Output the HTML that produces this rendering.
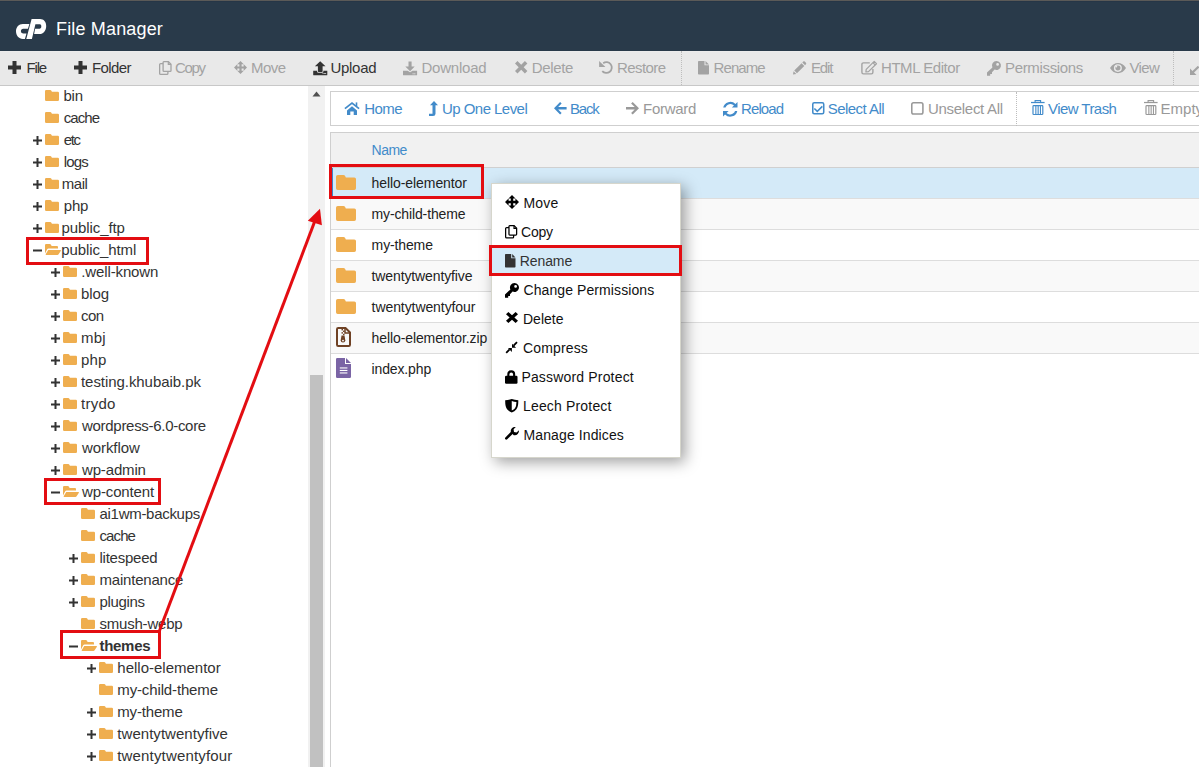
<!DOCTYPE html>
<html><head><meta charset="utf-8"><title>File Manager</title>
<style>
html,body{margin:0;padding:0;width:1199px;height:767px;overflow:hidden;background:#fff;position:relative;}
body{font-family:"Liberation Sans",sans-serif;}
.t{position:absolute;white-space:nowrap;font-family:"Liberation Sans",sans-serif;}
</style></head><body>
<div style="position:absolute;left:0px;top:0px;width:1199px;height:51px;background:#293a4a;"></div>
<div style="position:absolute;left:0px;top:0px;width:1199px;height:1px;background:#5b5a58;"></div>
<div style="position:absolute;left:0px;top:1px;width:1199px;height:1px;background:#263647;"></div>
<svg style="position:absolute;left:12px;top:15px" width="40" height="28" viewBox="0 0 40 28"><path fill="#fff" d="M17.4 8.9L10.8 8.9C6.8 8.9 4 12 4 16.3C4 20.6 6.8 23.9 10.8 23.9L12.9 23.9L14.5 18.4L10.9 18.4C9.6 18.4 8.9 17.4 8.9 16.1C8.9 14.7 9.8 13.7 11.1 13.7L15.95 13.7Z"/><path fill="#fff" d="M19.6 4L28 4C31.8 4 34.2 6.8 34.2 10.9C34.2 15.5 31.4 19 27.5 19L22.1 19L23.1 13.7L27.6 13.7C28.6 13.7 29.3 12.8 29.3 11.5C29.3 10.2 28.8 9.3 27.8 9.3L23.4 9.3L19.9 23.9L14.3 23.9Z"/></svg>
<div class="t" style="left:56.00px;top:20.16px;font-size:18px;line-height:18px;color:#fff;letter-spacing:0.164px;">File Manager</div>
<div style="position:absolute;left:0px;top:51px;width:1199px;height:34px;background:#e9e9e9;"></div>
<div style="position:absolute;left:0px;top:51px;width:1199px;height:1px;background:#ececec;"></div>
<div style="position:absolute;left:0px;top:85px;width:1199px;height:1px;background:#c8c8c8;"></div>
<svg style="position:absolute;left:8px;top:61px;overflow:visible" width="13" height="13" viewBox="0 0 13 13" preserveAspectRatio="none" fill="#333" stroke="#333" stroke-width="0"><rect x="4.5" y="0" width="4" height="13"/><rect x="0" y="4.5" width="13" height="4"/></svg>
<div class="t" style="left:26.50px;top:59.70px;font-size:15px;line-height:15px;color:#333;letter-spacing:-1.167px;">File</div>
<svg style="position:absolute;left:74px;top:61px;overflow:visible" width="13" height="13" viewBox="0 0 13 13" preserveAspectRatio="none" fill="#333" stroke="#333" stroke-width="0"><rect x="4.5" y="0" width="4" height="13"/><rect x="0" y="4.5" width="13" height="4"/></svg>
<div class="t" style="left:92.00px;top:59.70px;font-size:15px;line-height:15px;color:#333;letter-spacing:-0.600px;">Folder</div>
<svg style="position:absolute;left:158.5px;top:60.8px;overflow:visible" width="13" height="14" viewBox="0 0 13 14" preserveAspectRatio="none" fill="#a3a3a3" stroke="#a3a3a3" stroke-width="0"><path fill="none" stroke-width="1.3" d="M4.9 0.65H9.4L12 3.25V9.5Q12 10.35 11.15 10.35H4.95Q4.1 10.35 4.1 9.5V1.5Q4.1 0.65 4.9 0.65Z"/><path fill="none" stroke-width="1.2" d="M9.3 0.7V3.4H12"/><path fill="none" stroke-width="1.3" d="M4.1 2.6H1.7Q0.65 2.6 0.65 3.6V12.4Q0.65 13.35 1.7 13.35H7.9Q8.9 13.35 8.9 12.4V10.35"/></svg>
<div class="t" style="left:175.00px;top:59.70px;font-size:15px;line-height:15px;color:#a3a3a3;letter-spacing:-1.333px;">Copy</div>
<svg style="position:absolute;left:234px;top:61px;overflow:visible" width="13" height="13" viewBox="0 0 14 14" preserveAspectRatio="none" fill="#a3a3a3" stroke="#a3a3a3" stroke-width="0"><path fill-rule="evenodd" d="M7 0L14 7L7 14L0 7ZM3.6 3.6V5.8H5.8V3.6ZM8.2 3.6V5.8H10.4V3.6ZM3.6 8.2V10.4H5.8V8.2ZM8.2 8.2V10.4H10.4V8.2Z"/></svg>
<div class="t" style="left:251.00px;top:59.70px;font-size:15px;line-height:15px;color:#a3a3a3;letter-spacing:-0.533px;">Move</div>
<svg style="position:absolute;left:312.5px;top:60.5px;overflow:visible" width="14" height="14" viewBox="0 0 14 14" preserveAspectRatio="none" fill="#333" stroke="#333" stroke-width="0"><path d="M7.2 0.2L12.5 5.3H9.6V10.2Q9.6 10.9 8.9 10.9H5.6Q4.9 10.9 4.9 10.2V5.3H1.9Z"/><path d="M0.2 9.7H4.1V10.4Q4.1 11.7 5.4 11.7H9.1Q10.4 11.7 10.4 10.4V9.7H14.3V13.8Q14.3 14.3 13.8 14.3H0.7Q0.2 14.3 0.2 13.8Z"/><rect x="9.6" y="12.1" width="0.9" height="0.9" fill="#e9e9e9"/><rect x="10.9" y="12.1" width="0.9" height="0.9" fill="#e9e9e9"/><rect x="12.2" y="12.1" width="0.9" height="0.9" fill="#e9e9e9"/></svg>
<div class="t" style="left:330.50px;top:59.70px;font-size:15px;line-height:15px;color:#333;letter-spacing:-0.300px;">Upload</div>
<svg style="position:absolute;left:403.4px;top:60.5px;overflow:visible" width="14" height="14" viewBox="0 0 14 14" preserveAspectRatio="none" fill="#a3a3a3" stroke="#a3a3a3" stroke-width="0"><path d="M5.5 0.5H8.6V5.5H11.7L7.1 10.2L2.3 5.5H5.5Z"/><path d="M0 9.7H4.6L7.1 11.3L9.6 9.7H14.1V13.8Q14.1 14.3 13.6 14.3H0.5Q0 14.3 0 13.8Z"/><rect x="9.6" y="12.3" width="1" height="1" fill="#e9e9e9"/><rect x="11.3" y="12.3" width="1" height="1" fill="#e9e9e9"/></svg>
<div class="t" style="left:421.50px;top:59.70px;font-size:15px;line-height:15px;color:#a3a3a3;letter-spacing:-0.214px;">Download</div>
<svg style="position:absolute;left:514.6px;top:61px;overflow:visible" width="12.4" height="12.4" viewBox="0 0 12 11" preserveAspectRatio="none" fill="#a3a3a3" stroke="#a3a3a3" stroke-width="0"><path d="M2.4 0L6 3.3L9.6 0L12 2.2L8.4 5.5L12 8.8L9.6 11L6 7.7L2.4 11L0 8.8L3.6 5.5L0 2.2Z"/></svg>
<div class="t" style="left:531.70px;top:59.70px;font-size:15px;line-height:15px;color:#a3a3a3;letter-spacing:-0.340px;">Delete</div>
<svg style="position:absolute;left:599px;top:61px;overflow:visible" width="14" height="14" viewBox="0 0 14 14" preserveAspectRatio="none" fill="#a3a3a3" stroke="#a3a3a3" stroke-width="0"><path fill="none" stroke-width="1.8" d="M4.2 2.2A5.4 5.4 0 1 1 3.26 10.07"/><path d="M0.1 -0.1V5.9H6.4Z"/></svg>
<div class="t" style="left:617.00px;top:59.70px;font-size:15px;line-height:15px;color:#a3a3a3;letter-spacing:-0.567px;">Restore</div>
<div style="position:absolute;left:680.5px;top:51px;width:1px;height:34px;border-left:1px dotted #bdbdbd;width:0;"></div>
<svg style="position:absolute;left:698px;top:60.5px;overflow:visible" width="11" height="13.5" viewBox="0 0 11 14" preserveAspectRatio="none" fill="#a3a3a3" stroke="#a3a3a3" stroke-width="0"><path d="M0 .8Q0 0 .8 0H6.5V4.5H11V13.2Q11 14 10.2 14H.8Q0 14 0 13.2Z"/><path d="M7.5 0L11 3.5H7.5Z"/></svg>
<div class="t" style="left:713.60px;top:59.70px;font-size:15px;line-height:15px;color:#a3a3a3;letter-spacing:-0.920px;">Rename</div>
<svg style="position:absolute;left:793px;top:61px;overflow:visible" width="13.5" height="13.5" viewBox="0 0 14 14" preserveAspectRatio="none" fill="#a3a3a3" stroke="#a3a3a3" stroke-width="0"><path d="M0 14L0.6 10.6L3.4 13.4Z"/><path d="M1.3 9.9L8.9 2.3L11.7 5.1L4.1 12.7Z"/><path d="M9.7 1.5L10.6 0.6Q11.4 -0.2 12.2 0.6L13.4 1.8Q14.2 2.6 13.4 3.4L12.5 4.3Z"/></svg>
<div class="t" style="left:811.00px;top:59.70px;font-size:15px;line-height:15px;color:#a3a3a3;letter-spacing:-1.133px;">Edit</div>
<svg style="position:absolute;left:861px;top:61px;overflow:visible" width="16" height="14" viewBox="0 0 16 14" preserveAspectRatio="none" fill="#a3a3a3" stroke="#a3a3a3" stroke-width="0"><path fill="none" stroke-width="1.4" d="M8.8 1.9H2.5Q0.9 1.9 0.9 3.5V11.3Q0.9 12.9 2.5 12.9H10.3Q11.9 12.9 11.9 11.3V8"/><path fill="none" stroke-width="1.2" stroke-linejoin="round" d="M4.9 10.9L5.2 8.4L13.2 0.4L15.5 2.7L7.5 10.6Z"/><path fill="none" stroke-width="1.1" d="M11.9 1.7L14.2 4"/></svg>
<div class="t" style="left:881.00px;top:59.70px;font-size:15px;line-height:15px;color:#a3a3a3;letter-spacing:-0.450px;">HTML Editor</div>
<svg style="position:absolute;left:987px;top:61px;overflow:visible" width="14" height="14" viewBox="0 0 14 14" preserveAspectRatio="none" fill="#a3a3a3" stroke="#a3a3a3" stroke-width="0"><path d="M9.5 0A4.5 4.5 0 1 1 7.6 8.6L5 11.2V13H3.2V14.8H0V11.6L5.4 6.4A4.5 4.5 0 0 1 9.5 0ZM10.6 2A1.4 1.4 0 1 0 10.6 4.8A1.4 1.4 0 1 0 10.6 2Z"/></svg>
<div class="t" style="left:1005.00px;top:59.70px;font-size:15px;line-height:15px;color:#a3a3a3;letter-spacing:-0.340px;">Permissions</div>
<svg style="position:absolute;left:1110px;top:63.1px;overflow:visible" width="16" height="10.6" viewBox="0 0 16 11" preserveAspectRatio="none" fill="#a3a3a3" stroke="#a3a3a3" stroke-width="0"><path d="M0 5.3C2 1.5 5 0 8 0C11 0 14 1.5 16 5.3C14 9.1 11 10.6 8 10.6C5 10.6 2 9.1 0 5.3Z"/><circle cx="7.9" cy="5.25" r="4" fill="#e9e9e9"/><circle cx="7.9" cy="5.25" r="2.55"/><circle cx="6.3" cy="3.7" r="0.95" fill="#e9e9e9"/></svg>
<div class="t" style="left:1129.50px;top:59.70px;font-size:15px;line-height:15px;color:#a3a3a3;letter-spacing:-0.667px;">View</div>
<div style="position:absolute;left:1173px;top:51px;width:1px;height:34px;border-left:1px dotted #bdbdbd;width:0;"></div>
<svg style="position:absolute;left:1190px;top:66px" width="10" height="9" viewBox="0 0 10 9"><path d="M0 2.5V9H6.5Z" fill="#a3a3a3"/><path d="M2.5 6.5L8.6 0.6" stroke="#a3a3a3" stroke-width="2.2"/></svg>
<div style="position:absolute;left:308px;top:86px;width:17px;height:681px;background:#f1f1f1;"></div>
<svg style="position:absolute;left:312px;top:91px" width="9" height="6" viewBox="0 0 9 6"><path d="M4.5 0.5L8.5 5.5H0.5Z" fill="#505050"/></svg>
<div style="position:absolute;left:310px;top:375px;width:13px;height:392px;background:#c1c1c1;"></div>
<svg style="position:absolute;left:44.8px;top:90px;overflow:visible" width="14" height="11" viewBox="0 0 14 11" preserveAspectRatio="none" fill="#efae4f" stroke="#efae4f" stroke-width="0"><path d="M1.2 0H5.2Q6 0 6.4 .8L6.9 1.8H12.8Q14 1.8 14 3V9.8Q14 11 12.8 11H1.2Q0 11 0 9.8V1.2Q0 0 1.2 0Z"/></svg>
<div class="t" style="left:63.40px;top:88.30px;font-size:15px;line-height:15px;color:#333;letter-spacing:-0.200px;">bin</div>
<svg style="position:absolute;left:44.8px;top:112px;overflow:visible" width="14" height="11" viewBox="0 0 14 11" preserveAspectRatio="none" fill="#efae4f" stroke="#efae4f" stroke-width="0"><path d="M1.2 0H5.2Q6 0 6.4 .8L6.9 1.8H12.8Q14 1.8 14 3V9.8Q14 11 12.8 11H1.2Q0 11 0 9.8V1.2Q0 0 1.2 0Z"/></svg>
<div class="t" style="left:63.70px;top:110.30px;font-size:15px;line-height:15px;color:#333;letter-spacing:-0.925px;">cache</div>
<svg style="position:absolute;left:33px;top:136px;overflow:visible" width="9" height="9" viewBox="0 0 9 9" preserveAspectRatio="none" fill="#333" stroke="#333" stroke-width="0"><rect x="3.5" y="0" width="2" height="9"/><rect x="0" y="3.5" width="9" height="2"/></svg>
<svg style="position:absolute;left:44.8px;top:134px;overflow:visible" width="14" height="11" viewBox="0 0 14 11" preserveAspectRatio="none" fill="#efae4f" stroke="#efae4f" stroke-width="0"><path d="M1.2 0H5.2Q6 0 6.4 .8L6.9 1.8H12.8Q14 1.8 14 3V9.8Q14 11 12.8 11H1.2Q0 11 0 9.8V1.2Q0 0 1.2 0Z"/></svg>
<div class="t" style="left:63.70px;top:132.30px;font-size:15px;line-height:15px;color:#333;letter-spacing:-1.350px;">etc</div>
<svg style="position:absolute;left:33px;top:158px;overflow:visible" width="9" height="9" viewBox="0 0 9 9" preserveAspectRatio="none" fill="#333" stroke="#333" stroke-width="0"><rect x="3.5" y="0" width="2" height="9"/><rect x="0" y="3.5" width="9" height="2"/></svg>
<svg style="position:absolute;left:44.8px;top:156px;overflow:visible" width="14" height="11" viewBox="0 0 14 11" preserveAspectRatio="none" fill="#efae4f" stroke="#efae4f" stroke-width="0"><path d="M1.2 0H5.2Q6 0 6.4 .8L6.9 1.8H12.8Q14 1.8 14 3V9.8Q14 11 12.8 11H1.2Q0 11 0 9.8V1.2Q0 0 1.2 0Z"/></svg>
<div class="t" style="left:63.70px;top:154.30px;font-size:15px;line-height:15px;color:#333;letter-spacing:-0.833px;">logs</div>
<svg style="position:absolute;left:33px;top:180px;overflow:visible" width="9" height="9" viewBox="0 0 9 9" preserveAspectRatio="none" fill="#333" stroke="#333" stroke-width="0"><rect x="3.5" y="0" width="2" height="9"/><rect x="0" y="3.5" width="9" height="2"/></svg>
<svg style="position:absolute;left:44.8px;top:178px;overflow:visible" width="14" height="11" viewBox="0 0 14 11" preserveAspectRatio="none" fill="#efae4f" stroke="#efae4f" stroke-width="0"><path d="M1.2 0H5.2Q6 0 6.4 .8L6.9 1.8H12.8Q14 1.8 14 3V9.8Q14 11 12.8 11H1.2Q0 11 0 9.8V1.2Q0 0 1.2 0Z"/></svg>
<div class="t" style="left:61.70px;top:176.30px;font-size:15px;line-height:15px;color:#333;letter-spacing:-0.433px;">mail</div>
<svg style="position:absolute;left:33px;top:202px;overflow:visible" width="9" height="9" viewBox="0 0 9 9" preserveAspectRatio="none" fill="#333" stroke="#333" stroke-width="0"><rect x="3.5" y="0" width="2" height="9"/><rect x="0" y="3.5" width="9" height="2"/></svg>
<svg style="position:absolute;left:44.8px;top:200px;overflow:visible" width="14" height="11" viewBox="0 0 14 11" preserveAspectRatio="none" fill="#efae4f" stroke="#efae4f" stroke-width="0"><path d="M1.2 0H5.2Q6 0 6.4 .8L6.9 1.8H12.8Q14 1.8 14 3V9.8Q14 11 12.8 11H1.2Q0 11 0 9.8V1.2Q0 0 1.2 0Z"/></svg>
<div class="t" style="left:63.70px;top:198.30px;font-size:15px;line-height:15px;color:#333;letter-spacing:-0.150px;">php</div>
<svg style="position:absolute;left:33px;top:224px;overflow:visible" width="9" height="9" viewBox="0 0 9 9" preserveAspectRatio="none" fill="#333" stroke="#333" stroke-width="0"><rect x="3.5" y="0" width="2" height="9"/><rect x="0" y="3.5" width="9" height="2"/></svg>
<svg style="position:absolute;left:44.8px;top:222px;overflow:visible" width="14" height="11" viewBox="0 0 14 11" preserveAspectRatio="none" fill="#efae4f" stroke="#efae4f" stroke-width="0"><path d="M1.2 0H5.2Q6 0 6.4 .8L6.9 1.8H12.8Q14 1.8 14 3V9.8Q14 11 12.8 11H1.2Q0 11 0 9.8V1.2Q0 0 1.2 0Z"/></svg>
<div class="t" style="left:61.50px;top:220.30px;font-size:15px;line-height:15px;color:#333;letter-spacing:-0.089px;">public_ftp</div>
<svg style="position:absolute;left:33px;top:246px;overflow:visible" width="9" height="9" viewBox="0 0 9 9" preserveAspectRatio="none" fill="#333" stroke="#333" stroke-width="0"><rect x="0" y="3.5" width="9" height="2"/></svg>
<svg style="position:absolute;left:44.5px;top:244px;overflow:visible" width="16" height="11" viewBox="0 0 16 12" preserveAspectRatio="none" fill="#efae4f" stroke="#efae4f" stroke-width="0"><path d="M0 1.2Q0 0 1.2 0H4.8Q5.6 0 6 .8L6.6 2.3H12Q13 2.3 13 3.3V5H3.6Q2.6 5 2.2 5.8L0 10.4Z"/><path d="M3.2 6.55H15.4Q16.2 6.55 15.9 7.3L13.6 11.2Q13.3 12 12.4 12H1.2Q.4 12 .7 11.2Z"/></svg>
<div class="t" style="left:61.30px;top:242.30px;font-size:15px;line-height:15px;color:#333;letter-spacing:-0.090px;">public_html</div>
<svg style="position:absolute;left:51px;top:268px;overflow:visible" width="9" height="9" viewBox="0 0 9 9" preserveAspectRatio="none" fill="#333" stroke="#333" stroke-width="0"><rect x="3.5" y="0" width="2" height="9"/><rect x="0" y="3.5" width="9" height="2"/></svg>
<svg style="position:absolute;left:62.8px;top:266px;overflow:visible" width="14" height="11" viewBox="0 0 14 11" preserveAspectRatio="none" fill="#efae4f" stroke="#efae4f" stroke-width="0"><path d="M1.2 0H5.2Q6 0 6.4 .8L6.9 1.8H12.8Q14 1.8 14 3V9.8Q14 11 12.8 11H1.2Q0 11 0 9.8V1.2Q0 0 1.2 0Z"/></svg>
<div class="t" style="left:81.30px;top:264.30px;font-size:15px;line-height:15px;color:#333;letter-spacing:-0.130px;">.well-known</div>
<svg style="position:absolute;left:51px;top:290px;overflow:visible" width="9" height="9" viewBox="0 0 9 9" preserveAspectRatio="none" fill="#333" stroke="#333" stroke-width="0"><rect x="3.5" y="0" width="2" height="9"/><rect x="0" y="3.5" width="9" height="2"/></svg>
<svg style="position:absolute;left:62.8px;top:288px;overflow:visible" width="14" height="11" viewBox="0 0 14 11" preserveAspectRatio="none" fill="#efae4f" stroke="#efae4f" stroke-width="0"><path d="M1.2 0H5.2Q6 0 6.4 .8L6.9 1.8H12.8Q14 1.8 14 3V9.8Q14 11 12.8 11H1.2Q0 11 0 9.8V1.2Q0 0 1.2 0Z"/></svg>
<div class="t" style="left:81.00px;top:286.30px;font-size:15px;line-height:15px;color:#333;letter-spacing:-0.100px;">blog</div>
<svg style="position:absolute;left:51px;top:312px;overflow:visible" width="9" height="9" viewBox="0 0 9 9" preserveAspectRatio="none" fill="#333" stroke="#333" stroke-width="0"><rect x="3.5" y="0" width="2" height="9"/><rect x="0" y="3.5" width="9" height="2"/></svg>
<svg style="position:absolute;left:62.8px;top:310px;overflow:visible" width="14" height="11" viewBox="0 0 14 11" preserveAspectRatio="none" fill="#efae4f" stroke="#efae4f" stroke-width="0"><path d="M1.2 0H5.2Q6 0 6.4 .8L6.9 1.8H12.8Q14 1.8 14 3V9.8Q14 11 12.8 11H1.2Q0 11 0 9.8V1.2Q0 0 1.2 0Z"/></svg>
<div class="t" style="left:81.00px;top:308.30px;font-size:15px;line-height:15px;color:#333;letter-spacing:-0.550px;">con</div>
<svg style="position:absolute;left:51px;top:334px;overflow:visible" width="9" height="9" viewBox="0 0 9 9" preserveAspectRatio="none" fill="#333" stroke="#333" stroke-width="0"><rect x="3.5" y="0" width="2" height="9"/><rect x="0" y="3.5" width="9" height="2"/></svg>
<svg style="position:absolute;left:62.8px;top:332px;overflow:visible" width="14" height="11" viewBox="0 0 14 11" preserveAspectRatio="none" fill="#efae4f" stroke="#efae4f" stroke-width="0"><path d="M1.2 0H5.2Q6 0 6.4 .8L6.9 1.8H12.8Q14 1.8 14 3V9.8Q14 11 12.8 11H1.2Q0 11 0 9.8V1.2Q0 0 1.2 0Z"/></svg>
<div class="t" style="left:81.00px;top:330.30px;font-size:15px;line-height:15px;color:#333;letter-spacing:0.200px;">mbj</div>
<svg style="position:absolute;left:51px;top:356px;overflow:visible" width="9" height="9" viewBox="0 0 9 9" preserveAspectRatio="none" fill="#333" stroke="#333" stroke-width="0"><rect x="3.5" y="0" width="2" height="9"/><rect x="0" y="3.5" width="9" height="2"/></svg>
<svg style="position:absolute;left:62.8px;top:354px;overflow:visible" width="14" height="11" viewBox="0 0 14 11" preserveAspectRatio="none" fill="#efae4f" stroke="#efae4f" stroke-width="0"><path d="M1.2 0H5.2Q6 0 6.4 .8L6.9 1.8H12.8Q14 1.8 14 3V9.8Q14 11 12.8 11H1.2Q0 11 0 9.8V1.2Q0 0 1.2 0Z"/></svg>
<div class="t" style="left:81.00px;top:352.30px;font-size:15px;line-height:15px;color:#333;letter-spacing:0.200px;">php</div>
<svg style="position:absolute;left:51px;top:378px;overflow:visible" width="9" height="9" viewBox="0 0 9 9" preserveAspectRatio="none" fill="#333" stroke="#333" stroke-width="0"><rect x="3.5" y="0" width="2" height="9"/><rect x="0" y="3.5" width="9" height="2"/></svg>
<svg style="position:absolute;left:62.8px;top:376px;overflow:visible" width="14" height="11" viewBox="0 0 14 11" preserveAspectRatio="none" fill="#efae4f" stroke="#efae4f" stroke-width="0"><path d="M1.2 0H5.2Q6 0 6.4 .8L6.9 1.8H12.8Q14 1.8 14 3V9.8Q14 11 12.8 11H1.2Q0 11 0 9.8V1.2Q0 0 1.2 0Z"/></svg>
<div class="t" style="left:81.00px;top:374.30px;font-size:15px;line-height:15px;color:#333;letter-spacing:-0.059px;">testing.khubaib.pk</div>
<svg style="position:absolute;left:51px;top:400px;overflow:visible" width="9" height="9" viewBox="0 0 9 9" preserveAspectRatio="none" fill="#333" stroke="#333" stroke-width="0"><rect x="3.5" y="0" width="2" height="9"/><rect x="0" y="3.5" width="9" height="2"/></svg>
<svg style="position:absolute;left:62.8px;top:398px;overflow:visible" width="14" height="11" viewBox="0 0 14 11" preserveAspectRatio="none" fill="#efae4f" stroke="#efae4f" stroke-width="0"><path d="M1.2 0H5.2Q6 0 6.4 .8L6.9 1.8H12.8Q14 1.8 14 3V9.8Q14 11 12.8 11H1.2Q0 11 0 9.8V1.2Q0 0 1.2 0Z"/></svg>
<div class="t" style="left:81.00px;top:396.30px;font-size:15px;line-height:15px;color:#333;letter-spacing:0.250px;">trydo</div>
<svg style="position:absolute;left:51px;top:422px;overflow:visible" width="9" height="9" viewBox="0 0 9 9" preserveAspectRatio="none" fill="#333" stroke="#333" stroke-width="0"><rect x="3.5" y="0" width="2" height="9"/><rect x="0" y="3.5" width="9" height="2"/></svg>
<svg style="position:absolute;left:62.8px;top:420px;overflow:visible" width="14" height="11" viewBox="0 0 14 11" preserveAspectRatio="none" fill="#efae4f" stroke="#efae4f" stroke-width="0"><path d="M1.2 0H5.2Q6 0 6.4 .8L6.9 1.8H12.8Q14 1.8 14 3V9.8Q14 11 12.8 11H1.2Q0 11 0 9.8V1.2Q0 0 1.2 0Z"/></svg>
<div class="t" style="left:82.00px;top:418.30px;font-size:15px;line-height:15px;color:#333;letter-spacing:-0.294px;">wordpress-6.0-core</div>
<svg style="position:absolute;left:51px;top:444px;overflow:visible" width="9" height="9" viewBox="0 0 9 9" preserveAspectRatio="none" fill="#333" stroke="#333" stroke-width="0"><rect x="3.5" y="0" width="2" height="9"/><rect x="0" y="3.5" width="9" height="2"/></svg>
<svg style="position:absolute;left:62.8px;top:442px;overflow:visible" width="14" height="11" viewBox="0 0 14 11" preserveAspectRatio="none" fill="#efae4f" stroke="#efae4f" stroke-width="0"><path d="M1.2 0H5.2Q6 0 6.4 .8L6.9 1.8H12.8Q14 1.8 14 3V9.8Q14 11 12.8 11H1.2Q0 11 0 9.8V1.2Q0 0 1.2 0Z"/></svg>
<div class="t" style="left:82.00px;top:440.30px;font-size:15px;line-height:15px;color:#333;letter-spacing:-0.086px;">workflow</div>
<svg style="position:absolute;left:51px;top:466px;overflow:visible" width="9" height="9" viewBox="0 0 9 9" preserveAspectRatio="none" fill="#333" stroke="#333" stroke-width="0"><rect x="3.5" y="0" width="2" height="9"/><rect x="0" y="3.5" width="9" height="2"/></svg>
<svg style="position:absolute;left:62.8px;top:464px;overflow:visible" width="14" height="11" viewBox="0 0 14 11" preserveAspectRatio="none" fill="#efae4f" stroke="#efae4f" stroke-width="0"><path d="M1.2 0H5.2Q6 0 6.4 .8L6.9 1.8H12.8Q14 1.8 14 3V9.8Q14 11 12.8 11H1.2Q0 11 0 9.8V1.2Q0 0 1.2 0Z"/></svg>
<div class="t" style="left:82.00px;top:462.30px;font-size:15px;line-height:15px;color:#333;letter-spacing:-0.157px;">wp-admin</div>
<svg style="position:absolute;left:51px;top:488px;overflow:visible" width="9" height="9" viewBox="0 0 9 9" preserveAspectRatio="none" fill="#333" stroke="#333" stroke-width="0"><rect x="0" y="3.5" width="9" height="2"/></svg>
<svg style="position:absolute;left:62.5px;top:486px;overflow:visible" width="16" height="11" viewBox="0 0 16 12" preserveAspectRatio="none" fill="#efae4f" stroke="#efae4f" stroke-width="0"><path d="M0 1.2Q0 0 1.2 0H4.8Q5.6 0 6 .8L6.6 2.3H12Q13 2.3 13 3.3V5H3.6Q2.6 5 2.2 5.8L0 10.4Z"/><path d="M3.2 6.55H15.4Q16.2 6.55 15.9 7.3L13.6 11.2Q13.3 12 12.4 12H1.2Q.4 12 .7 11.2Z"/></svg>
<div class="t" style="left:82.00px;top:484.30px;font-size:15px;line-height:15px;color:#333;letter-spacing:-0.133px;">wp-content</div>
<svg style="position:absolute;left:80.8px;top:508px;overflow:visible" width="14" height="11" viewBox="0 0 14 11" preserveAspectRatio="none" fill="#efae4f" stroke="#efae4f" stroke-width="0"><path d="M1.2 0H5.2Q6 0 6.4 .8L6.9 1.8H12.8Q14 1.8 14 3V9.8Q14 11 12.8 11H1.2Q0 11 0 9.8V1.2Q0 0 1.2 0Z"/></svg>
<div class="t" style="left:99.50px;top:506.30px;font-size:15px;line-height:15px;color:#333;letter-spacing:-0.292px;">ai1wm-backups</div>
<svg style="position:absolute;left:80.8px;top:530px;overflow:visible" width="14" height="11" viewBox="0 0 14 11" preserveAspectRatio="none" fill="#efae4f" stroke="#efae4f" stroke-width="0"><path d="M1.2 0H5.2Q6 0 6.4 .8L6.9 1.8H12.8Q14 1.8 14 3V9.8Q14 11 12.8 11H1.2Q0 11 0 9.8V1.2Q0 0 1.2 0Z"/></svg>
<div class="t" style="left:99.50px;top:528.30px;font-size:15px;line-height:15px;color:#333;letter-spacing:-0.900px;">cache</div>
<svg style="position:absolute;left:69px;top:554px;overflow:visible" width="9" height="9" viewBox="0 0 9 9" preserveAspectRatio="none" fill="#333" stroke="#333" stroke-width="0"><rect x="3.5" y="0" width="2" height="9"/><rect x="0" y="3.5" width="9" height="2"/></svg>
<svg style="position:absolute;left:80.8px;top:552px;overflow:visible" width="14" height="11" viewBox="0 0 14 11" preserveAspectRatio="none" fill="#efae4f" stroke="#efae4f" stroke-width="0"><path d="M1.2 0H5.2Q6 0 6.4 .8L6.9 1.8H12.8Q14 1.8 14 3V9.8Q14 11 12.8 11H1.2Q0 11 0 9.8V1.2Q0 0 1.2 0Z"/></svg>
<div class="t" style="left:99.50px;top:550.30px;font-size:15px;line-height:15px;color:#333;letter-spacing:-0.238px;">litespeed</div>
<svg style="position:absolute;left:69px;top:576px;overflow:visible" width="9" height="9" viewBox="0 0 9 9" preserveAspectRatio="none" fill="#333" stroke="#333" stroke-width="0"><rect x="3.5" y="0" width="2" height="9"/><rect x="0" y="3.5" width="9" height="2"/></svg>
<svg style="position:absolute;left:80.8px;top:574px;overflow:visible" width="14" height="11" viewBox="0 0 14 11" preserveAspectRatio="none" fill="#efae4f" stroke="#efae4f" stroke-width="0"><path d="M1.2 0H5.2Q6 0 6.4 .8L6.9 1.8H12.8Q14 1.8 14 3V9.8Q14 11 12.8 11H1.2Q0 11 0 9.8V1.2Q0 0 1.2 0Z"/></svg>
<div class="t" style="left:99.50px;top:572.30px;font-size:15px;line-height:15px;color:#333;letter-spacing:-0.210px;">maintenance</div>
<svg style="position:absolute;left:69px;top:598px;overflow:visible" width="9" height="9" viewBox="0 0 9 9" preserveAspectRatio="none" fill="#333" stroke="#333" stroke-width="0"><rect x="3.5" y="0" width="2" height="9"/><rect x="0" y="3.5" width="9" height="2"/></svg>
<svg style="position:absolute;left:80.8px;top:596px;overflow:visible" width="14" height="11" viewBox="0 0 14 11" preserveAspectRatio="none" fill="#efae4f" stroke="#efae4f" stroke-width="0"><path d="M1.2 0H5.2Q6 0 6.4 .8L6.9 1.8H12.8Q14 1.8 14 3V9.8Q14 11 12.8 11H1.2Q0 11 0 9.8V1.2Q0 0 1.2 0Z"/></svg>
<div class="t" style="left:99.50px;top:594.30px;font-size:15px;line-height:15px;color:#333;letter-spacing:-0.350px;">plugins</div>
<svg style="position:absolute;left:80.8px;top:618px;overflow:visible" width="14" height="11" viewBox="0 0 14 11" preserveAspectRatio="none" fill="#efae4f" stroke="#efae4f" stroke-width="0"><path d="M1.2 0H5.2Q6 0 6.4 .8L6.9 1.8H12.8Q14 1.8 14 3V9.8Q14 11 12.8 11H1.2Q0 11 0 9.8V1.2Q0 0 1.2 0Z"/></svg>
<div class="t" style="left:99.50px;top:616.30px;font-size:15px;line-height:15px;color:#333;letter-spacing:-0.211px;">smush-webp</div>
<svg style="position:absolute;left:69px;top:642px;overflow:visible" width="9" height="9" viewBox="0 0 9 9" preserveAspectRatio="none" fill="#333" stroke="#333" stroke-width="0"><rect x="0" y="3.5" width="9" height="2"/></svg>
<svg style="position:absolute;left:80.5px;top:640px;overflow:visible" width="16" height="11" viewBox="0 0 16 12" preserveAspectRatio="none" fill="#efae4f" stroke="#efae4f" stroke-width="0"><path d="M0 1.2Q0 0 1.2 0H4.8Q5.6 0 6 .8L6.6 2.3H12Q13 2.3 13 3.3V5H3.6Q2.6 5 2.2 5.8L0 10.4Z"/><path d="M3.2 6.55H15.4Q16.2 6.55 15.9 7.3L13.6 11.2Q13.3 12 12.4 12H1.2Q.4 12 .7 11.2Z"/></svg>
<div class="t" style="left:99.50px;top:638.30px;font-size:15px;line-height:15px;color:#333;letter-spacing:-0.300px;font-weight:bold;">themes</div>
<svg style="position:absolute;left:87px;top:664px;overflow:visible" width="9" height="9" viewBox="0 0 9 9" preserveAspectRatio="none" fill="#333" stroke="#333" stroke-width="0"><rect x="3.5" y="0" width="2" height="9"/><rect x="0" y="3.5" width="9" height="2"/></svg>
<svg style="position:absolute;left:98.8px;top:662px;overflow:visible" width="14" height="11" viewBox="0 0 14 11" preserveAspectRatio="none" fill="#efae4f" stroke="#efae4f" stroke-width="0"><path d="M1.2 0H5.2Q6 0 6.4 .8L6.9 1.8H12.8Q14 1.8 14 3V9.8Q14 11 12.8 11H1.2Q0 11 0 9.8V1.2Q0 0 1.2 0Z"/></svg>
<div class="t" style="left:117.30px;top:660.30px;font-size:15px;line-height:15px;color:#333;">hello-elementor</div>
<svg style="position:absolute;left:98.8px;top:684px;overflow:visible" width="14" height="11" viewBox="0 0 14 11" preserveAspectRatio="none" fill="#efae4f" stroke="#efae4f" stroke-width="0"><path d="M1.2 0H5.2Q6 0 6.4 .8L6.9 1.8H12.8Q14 1.8 14 3V9.8Q14 11 12.8 11H1.2Q0 11 0 9.8V1.2Q0 0 1.2 0Z"/></svg>
<div class="t" style="left:117.30px;top:682.30px;font-size:15px;line-height:15px;color:#333;letter-spacing:-0.138px;">my-child-theme</div>
<svg style="position:absolute;left:87px;top:708px;overflow:visible" width="9" height="9" viewBox="0 0 9 9" preserveAspectRatio="none" fill="#333" stroke="#333" stroke-width="0"><rect x="3.5" y="0" width="2" height="9"/><rect x="0" y="3.5" width="9" height="2"/></svg>
<svg style="position:absolute;left:98.8px;top:706px;overflow:visible" width="14" height="11" viewBox="0 0 14 11" preserveAspectRatio="none" fill="#efae4f" stroke="#efae4f" stroke-width="0"><path d="M1.2 0H5.2Q6 0 6.4 .8L6.9 1.8H12.8Q14 1.8 14 3V9.8Q14 11 12.8 11H1.2Q0 11 0 9.8V1.2Q0 0 1.2 0Z"/></svg>
<div class="t" style="left:117.30px;top:704.30px;font-size:15px;line-height:15px;color:#333;letter-spacing:-0.171px;">my-theme</div>
<svg style="position:absolute;left:87px;top:730px;overflow:visible" width="9" height="9" viewBox="0 0 9 9" preserveAspectRatio="none" fill="#333" stroke="#333" stroke-width="0"><rect x="3.5" y="0" width="2" height="9"/><rect x="0" y="3.5" width="9" height="2"/></svg>
<svg style="position:absolute;left:98.8px;top:728px;overflow:visible" width="14" height="11" viewBox="0 0 14 11" preserveAspectRatio="none" fill="#efae4f" stroke="#efae4f" stroke-width="0"><path d="M1.2 0H5.2Q6 0 6.4 .8L6.9 1.8H12.8Q14 1.8 14 3V9.8Q14 11 12.8 11H1.2Q0 11 0 9.8V1.2Q0 0 1.2 0Z"/></svg>
<div class="t" style="left:117.30px;top:726.30px;font-size:15px;line-height:15px;color:#333;letter-spacing:0.040px;">twentytwentyfive</div>
<svg style="position:absolute;left:87px;top:752px;overflow:visible" width="9" height="9" viewBox="0 0 9 9" preserveAspectRatio="none" fill="#333" stroke="#333" stroke-width="0"><rect x="3.5" y="0" width="2" height="9"/><rect x="0" y="3.5" width="9" height="2"/></svg>
<svg style="position:absolute;left:98.8px;top:750px;overflow:visible" width="14" height="11" viewBox="0 0 14 11" preserveAspectRatio="none" fill="#efae4f" stroke="#efae4f" stroke-width="0"><path d="M1.2 0H5.2Q6 0 6.4 .8L6.9 1.8H12.8Q14 1.8 14 3V9.8Q14 11 12.8 11H1.2Q0 11 0 9.8V1.2Q0 0 1.2 0Z"/></svg>
<div class="t" style="left:117.30px;top:748.30px;font-size:15px;line-height:15px;color:#333;letter-spacing:0.160px;">twentytwentyfour</div>
<div style="position:absolute;left:330px;top:91px;width:900px;height:35px;border:1px solid #cfcfcf;border-right:none;box-sizing:border-box;background:#fff;"></div>
<svg style="position:absolute;left:344px;top:102px;overflow:visible" width="16" height="13" viewBox="0 0 16 13" preserveAspectRatio="none" fill="#428bca" stroke="#428bca" stroke-width="0"><path d="M.9 6.7L8 1L15.1 6.7" fill="none" stroke-width="1.7"/><rect x="11.7" y="0.4" width="1.6" height="3.6"/><path d="M3 8.4L8 4.3L13 8.4V13H9.7V9.6H6.3V13H3Z"/></svg>
<div class="t" style="left:364.30px;top:100.70px;font-size:15px;line-height:15px;color:#428bca;letter-spacing:-0.567px;">Home</div>
<svg style="position:absolute;left:429px;top:100.5px;overflow:visible" width="9" height="15" viewBox="0 0 9 16" preserveAspectRatio="none" fill="#428bca" stroke="#428bca" stroke-width="0"><path d="M5 0L9 4.5H6.5V13.5Q6.5 16 4 16H0V13.5H3.5V4.5H1Z"/></svg>
<div class="t" style="left:442.00px;top:100.70px;font-size:15px;line-height:15px;color:#428bca;letter-spacing:-0.545px;">Up One Level</div>
<svg style="position:absolute;left:554px;top:102px;overflow:visible" width="12.6" height="12.6" viewBox="0 0 13 13" preserveAspectRatio="none" fill="#428bca" stroke="#428bca" stroke-width="0"><path d="M6.3 0L7.9 1.6L4.3 5.2H13V7.8H4.3L7.9 11.4L6.3 13L0 6.5Z"/></svg>
<div class="t" style="left:570.00px;top:100.70px;font-size:15px;line-height:15px;color:#428bca;letter-spacing:-1.200px;">Back</div>
<svg style="position:absolute;left:626.4px;top:102px;overflow:visible" width="13" height="12.6" viewBox="0 0 13 13" preserveAspectRatio="none" fill="#999" stroke="#999" stroke-width="0"><path d="M6.7 0L5.1 1.6L8.7 5.2H0V7.8H8.7L5.1 11.4L6.7 13L13 6.5Z"/></svg>
<div class="t" style="left:643.00px;top:100.70px;font-size:15px;line-height:15px;color:#999;letter-spacing:-0.267px;">Forward</div>
<svg style="position:absolute;left:722.5px;top:101.5px;overflow:visible" width="14.5" height="14.5" viewBox="0 0 15 15" preserveAspectRatio="none" fill="#428bca" stroke="#428bca" stroke-width="0"><path d="M15 0V5.8H9.2L11.3 3.7A5.2 5.2 0 0 0 2.6 5.8H.2A7.5 7.5 0 0 1 12.9 2.1Z"/><path d="M0 15V9.2H5.8L3.7 11.3A5.2 5.2 0 0 0 12.4 9.2H14.8A7.5 7.5 0 0 1 2.1 12.9Z"/></svg>
<div class="t" style="left:741.00px;top:100.70px;font-size:15px;line-height:15px;color:#428bca;letter-spacing:-0.880px;">Reload</div>
<svg style="position:absolute;left:811.5px;top:102px;overflow:visible" width="12.5" height="12.5" viewBox="0 0 13 13" preserveAspectRatio="none" fill="#428bca" stroke="#428bca" stroke-width="0"><rect x=".8" y=".8" width="11.4" height="11.4" rx="1.5" fill="none" stroke-width="1.6"/><path d="M3 6.2L5.5 8.7L10.2 4L11.3 5.1L5.5 10.9L1.9 7.3Z"/></svg>
<div class="t" style="left:827.70px;top:100.70px;font-size:15px;line-height:15px;color:#428bca;letter-spacing:-0.522px;">Select All</div>
<svg style="position:absolute;left:911px;top:102px;overflow:visible" width="12.7" height="12.7" viewBox="0 0 13 13" preserveAspectRatio="none" fill="#999" stroke="#999" stroke-width="0"><rect x=".8" y=".8" width="11.4" height="11.4" rx="1.8" fill="none" stroke-width="1.6"/></svg>
<div class="t" style="left:928.00px;top:100.70px;font-size:15px;line-height:15px;color:#999;letter-spacing:-0.300px;">Unselect All</div>
<div style="position:absolute;left:1016px;top:92px;width:1px;height:34px;border-left:1px dotted #bdbdbd;width:0;"></div>
<svg style="position:absolute;left:1031.3px;top:99.6px;overflow:visible" width="14" height="15" viewBox="0 0 14 15" preserveAspectRatio="none" fill="#428bca" stroke="#428bca" stroke-width="0"><rect x="0" y="1.9" width="13.6" height="1.25"/><rect x="4.1" y="0.55" width="5.5" height="1.9" fill="none" stroke-width="1.1"/><rect x="2" y="5.7" width="9.8" height="8.8" rx="0.7" fill="none" stroke-width="1.2"/><rect x="4.3" y="5.7" width="1.1" height="8.8"/><rect x="6.6" y="5.7" width="1.1" height="8.8"/><rect x="8.9" y="5.7" width="1.1" height="8.8"/></svg>
<div class="t" style="left:1048.00px;top:100.70px;font-size:15px;line-height:15px;color:#428bca;letter-spacing:-0.556px;">View Trash</div>
<svg style="position:absolute;left:1144.3px;top:99.6px;overflow:visible" width="14" height="15" viewBox="0 0 14 15" preserveAspectRatio="none" fill="#999" stroke="#999" stroke-width="0"><rect x="0" y="1.9" width="13.6" height="1.25"/><rect x="4.1" y="0.55" width="5.5" height="1.9" fill="none" stroke-width="1.1"/><rect x="2" y="5.7" width="9.8" height="8.8" rx="0.7" fill="none" stroke-width="1.2"/><rect x="4.3" y="5.7" width="1.1" height="8.8"/><rect x="6.6" y="5.7" width="1.1" height="8.8"/><rect x="8.9" y="5.7" width="1.1" height="8.8"/></svg>
<div class="t" style="left:1160.60px;top:100.70px;font-size:15px;line-height:15px;color:#999;">Empty Trash</div>
<div style="position:absolute;left:330px;top:132px;width:900px;height:1px;background:#cfcfcf;"></div>
<div style="position:absolute;left:330px;top:132px;width:1px;height:640px;background:#cfcfcf;"></div>
<div style="position:absolute;left:331px;top:133px;width:900px;height:34px;background:#f1f1f1;"></div>
<div style="position:absolute;left:331px;top:167px;width:900px;height:1px;background:#d0d0d0;"></div>
<div class="t" style="left:371.60px;top:143.15px;font-size:14px;line-height:14px;color:#428bca;letter-spacing:-0.533px;">Name</div>
<div style="position:absolute;left:331px;top:168px;width:900px;height:30px;background:#d4eaf8;"></div>
<div style="position:absolute;left:331px;top:198px;width:900px;height:1px;background:#dddddd;"></div>
<svg style="position:absolute;left:336px;top:175px;overflow:visible" width="20" height="15" viewBox="0 0 14 11" preserveAspectRatio="none" fill="#efae4f" stroke="#efae4f" stroke-width="0"><path d="M1.2 0H5.2Q6 0 6.4 .8L6.9 1.8H12.8Q14 1.8 14 3V9.8Q14 11 12.8 11H1.2Q0 11 0 9.8V1.2Q0 0 1.2 0Z"/></svg>
<div class="t" style="left:371.60px;top:175.95px;font-size:14px;line-height:14px;color:#222;letter-spacing:-0.079px;">hello-elementor</div>
<div style="position:absolute;left:331px;top:199px;width:900px;height:30px;background:#f9f9f9;"></div>
<div style="position:absolute;left:331px;top:229px;width:900px;height:1px;background:#dddddd;"></div>
<svg style="position:absolute;left:336px;top:206px;overflow:visible" width="20" height="15" viewBox="0 0 14 11" preserveAspectRatio="none" fill="#efae4f" stroke="#efae4f" stroke-width="0"><path d="M1.2 0H5.2Q6 0 6.4 .8L6.9 1.8H12.8Q14 1.8 14 3V9.8Q14 11 12.8 11H1.2Q0 11 0 9.8V1.2Q0 0 1.2 0Z"/></svg>
<div class="t" style="left:371.60px;top:206.95px;font-size:14px;line-height:14px;color:#222;letter-spacing:-0.138px;">my-child-theme</div>
<div style="position:absolute;left:331px;top:230px;width:900px;height:30px;background:#fff;"></div>
<div style="position:absolute;left:331px;top:260px;width:900px;height:1px;background:#dddddd;"></div>
<svg style="position:absolute;left:336px;top:237px;overflow:visible" width="20" height="15" viewBox="0 0 14 11" preserveAspectRatio="none" fill="#efae4f" stroke="#efae4f" stroke-width="0"><path d="M1.2 0H5.2Q6 0 6.4 .8L6.9 1.8H12.8Q14 1.8 14 3V9.8Q14 11 12.8 11H1.2Q0 11 0 9.8V1.2Q0 0 1.2 0Z"/></svg>
<div class="t" style="left:371.60px;top:237.95px;font-size:14px;line-height:14px;color:#222;letter-spacing:-0.129px;">my-theme</div>
<div style="position:absolute;left:331px;top:261px;width:900px;height:30px;background:#f9f9f9;"></div>
<div style="position:absolute;left:331px;top:291px;width:900px;height:1px;background:#dddddd;"></div>
<svg style="position:absolute;left:336px;top:268px;overflow:visible" width="20" height="15" viewBox="0 0 14 11" preserveAspectRatio="none" fill="#efae4f" stroke="#efae4f" stroke-width="0"><path d="M1.2 0H5.2Q6 0 6.4 .8L6.9 1.8H12.8Q14 1.8 14 3V9.8Q14 11 12.8 11H1.2Q0 11 0 9.8V1.2Q0 0 1.2 0Z"/></svg>
<div class="t" style="left:371.60px;top:268.95px;font-size:14px;line-height:14px;color:#222;letter-spacing:-0.120px;">twentytwentyfive</div>
<div style="position:absolute;left:331px;top:292px;width:900px;height:30px;background:#fff;"></div>
<div style="position:absolute;left:331px;top:322px;width:900px;height:1px;background:#dddddd;"></div>
<svg style="position:absolute;left:336px;top:299px;overflow:visible" width="20" height="15" viewBox="0 0 14 11" preserveAspectRatio="none" fill="#efae4f" stroke="#efae4f" stroke-width="0"><path d="M1.2 0H5.2Q6 0 6.4 .8L6.9 1.8H12.8Q14 1.8 14 3V9.8Q14 11 12.8 11H1.2Q0 11 0 9.8V1.2Q0 0 1.2 0Z"/></svg>
<div class="t" style="left:371.60px;top:299.95px;font-size:14px;line-height:14px;color:#222;letter-spacing:-0.080px;">twentytwentyfour</div>
<div style="position:absolute;left:331px;top:323px;width:900px;height:30px;background:#f9f9f9;"></div>
<div style="position:absolute;left:331px;top:353px;width:900px;height:1px;background:#dddddd;"></div>
<svg style="position:absolute;left:336px;top:327px;overflow:visible" width="15" height="20" viewBox="0 0 15 20" preserveAspectRatio="none" fill="#6f4225" stroke="#6f4225" stroke-width="0"><path fill="none" stroke-width="2" d="M1 2.2Q1 1 2.2 1H9.5L14 5.5V17.8Q14 19 12.8 19H2.2Q1 19 1 17.8Z"/><path d="M9 1V6H14" fill="none" stroke-width="1.5"/><rect x="5.5" y="2" width="1.5" height="1.4"/><rect x="7" y="3.6" width="1.5" height="1.4"/><rect x="5.5" y="5.2" width="1.5" height="1.4"/><rect x="7" y="6.8" width="1.5" height="1.4"/><path d="M5.5 8.6H8.5L9.3 13.2A2 2 0 1 1 4.7 13.2Z" fill-rule="evenodd"/><circle cx="7" cy="13.6" r="0.9" fill="#fff"/></svg>
<div class="t" style="left:371.60px;top:330.95px;font-size:14px;line-height:14px;color:#222;letter-spacing:-0.100px;">hello-elementor.zip</div>
<div style="position:absolute;left:331px;top:354px;width:900px;height:30px;background:#fff;"></div>
<svg style="position:absolute;left:336px;top:358px;overflow:visible" width="15" height="20" viewBox="0 0 15 20" preserveAspectRatio="none" fill="#7a64a5" stroke="#7a64a5" stroke-width="0"><path d="M0 1.2Q0 0 1.2 0H9V6H15V18.8Q15 20 13.8 20H1.2Q0 20 0 18.8Z"/><path d="M10 0L15 5H10Z"/><rect x="3.8" y="9.4" width="7.6" height="1.1" fill="#fff"/><rect x="3.8" y="11.9" width="7.6" height="1.1" fill="#fff"/><rect x="3.8" y="14.4" width="7.6" height="1.1" fill="#fff"/></svg>
<div class="t" style="left:371.60px;top:361.95px;font-size:14px;line-height:14px;color:#222;letter-spacing:-0.138px;">index.php</div>
<div style="position:absolute;left:331px;top:168px;width:2px;height:30px;background:#3b87c8;"></div>
<div style="position:absolute;left:491px;top:183px;width:190px;height:275px;background:#fff;border:1px solid #d6d6cc;box-sizing:border-box;box-shadow:4px 4px 14px rgba(0,0,0,.38);"></div>
<div style="position:absolute;left:492px;top:248px;width:188px;height:26px;background:#d4eaf8;"></div>
<svg style="position:absolute;left:505px;top:195px;overflow:visible" width="14" height="14" viewBox="0 0 14 14" preserveAspectRatio="none" fill="#000" stroke="#000" stroke-width="0"><path fill-rule="evenodd" d="M7 0L14 7L7 14L0 7ZM3.6 3.6V5.8H5.8V3.6ZM8.2 3.6V5.8H10.4V3.6ZM3.6 8.2V10.4H5.8V8.2ZM8.2 8.2V10.4H10.4V8.2Z"/></svg>
<div class="t" style="left:523.50px;top:196.15px;font-size:14px;line-height:14px;color:#111;letter-spacing:0.167px;">Move</div>
<svg style="position:absolute;left:504.6px;top:224.7px;overflow:visible" width="12.6" height="13.6" viewBox="0 0 13 14" preserveAspectRatio="none" fill="#000" stroke="#000" stroke-width="0"><path fill="none" stroke-width="1.3" d="M4.9 0.65H9.4L12 3.25V9.5Q12 10.35 11.15 10.35H4.95Q4.1 10.35 4.1 9.5V1.5Q4.1 0.65 4.9 0.65Z"/><path fill="none" stroke-width="1.2" d="M9.3 0.7V3.4H12"/><path fill="none" stroke-width="1.3" d="M4.1 2.6H1.7Q0.65 2.6 0.65 3.6V12.4Q0.65 13.35 1.7 13.35H7.9Q8.9 13.35 8.9 12.4V10.35"/></svg>
<div class="t" style="left:521.00px;top:225.15px;font-size:14px;line-height:14px;color:#111;letter-spacing:-0.200px;">Copy</div>
<svg style="position:absolute;left:505px;top:254px;overflow:visible" width="10.5" height="13.5" viewBox="0 0 11 14" preserveAspectRatio="none" fill="#333" stroke="#333" stroke-width="0"><path d="M0 .8Q0 0 .8 0H6.5V4.5H11V13.2Q11 14 10.2 14H.8Q0 14 0 13.2Z"/><path d="M7.5 0L11 3.5H7.5Z"/></svg>
<div class="t" style="left:519.80px;top:254.15px;font-size:14px;line-height:14px;color:#333;letter-spacing:-0.100px;">Rename</div>
<svg style="position:absolute;left:505px;top:282.6px;overflow:visible" width="14" height="14" viewBox="0 0 14 14" preserveAspectRatio="none" fill="#000" stroke="#000" stroke-width="0"><path d="M9.5 0A4.5 4.5 0 1 1 7.6 8.6L5 11.2V13H3.2V14.8H0V11.6L5.4 6.4A4.5 4.5 0 0 1 9.5 0ZM10.6 2A1.4 1.4 0 1 0 10.6 4.8A1.4 1.4 0 1 0 10.6 2Z"/></svg>
<div class="t" style="left:523.50px;top:283.15px;font-size:14px;line-height:14px;color:#111;letter-spacing:0.088px;">Change Permissions</div>
<svg style="position:absolute;left:506.2px;top:311.7px;overflow:visible" width="12" height="11" viewBox="0 0 12 11" preserveAspectRatio="none" fill="#000" stroke="#000" stroke-width="0"><path d="M2.4 0L6 3.3L9.6 0L12 2.2L8.4 5.5L12 8.8L9.6 11L6 7.7L2.4 11L0 8.8L3.6 5.5L0 2.2Z"/></svg>
<div class="t" style="left:523.00px;top:312.15px;font-size:14px;line-height:14px;color:#111;">Delete</div>
<svg style="position:absolute;left:505px;top:340.5px;overflow:visible" width="13" height="12.8" viewBox="0 0 13 13" preserveAspectRatio="none" fill="#000" stroke="#000" stroke-width="0"><path d="M7 2.8V6.8H11.1Z"/><path d="M8.6 4.6L12 1.2" stroke-width="1.8" fill="none"/><path d="M3 7.1H6.9V11.1Z"/><path d="M4.6 8.6L1.2 12" stroke-width="1.8" fill="none"/></svg>
<div class="t" style="left:523.00px;top:341.15px;font-size:14px;line-height:14px;color:#111;letter-spacing:0.143px;">Compress</div>
<svg style="position:absolute;left:504.7px;top:369.7px;overflow:visible" width="12.5" height="13.7" viewBox="0 0 12.5 14" preserveAspectRatio="none" fill="#000" stroke="#000" stroke-width="0"><path d="M2.3 6.2V4.3A3.95 3.95 0 0 1 10.2 4.3V6.2H8.1V4.5A1.85 1.85 0 0 0 4.4 4.5V6.2Z"/><rect x="0" y="6" width="12.5" height="8" rx="1.2"/></svg>
<div class="t" style="left:521.40px;top:370.15px;font-size:14px;line-height:14px;color:#111;letter-spacing:0.173px;">Password Protect</div>
<svg style="position:absolute;left:505px;top:399px;overflow:visible" width="13.5" height="13.5" viewBox="0 0 13 14" preserveAspectRatio="none" fill="#000" stroke="#000" stroke-width="0"><path fill-rule="evenodd" d="M6.5 0Q9.5 1.2 12.8 1.2Q13 8 11 10.6Q9.3 12.8 6.5 14Q3.7 12.8 2 10.6Q0 8 .2 1.2Q3.5 1.2 6.5 0ZM6.5 2V12Q8.6 11 9.6 9.5Q11 7.5 11 3Q8.8 2.9 6.5 2Z"/></svg>
<div class="t" style="left:523.00px;top:399.15px;font-size:14px;line-height:14px;color:#111;letter-spacing:0.167px;">Leech Protect</div>
<svg style="position:absolute;left:505px;top:427.4px;overflow:visible" width="14" height="14" viewBox="0 0 14 14" preserveAspectRatio="none" fill="#000" stroke="#000" stroke-width="0"><path d="M1.3 11.4L7.2 5.5" stroke-width="2.6" stroke-linecap="round" fill="none"/><path d="M5.8 5.2A4.2 4.2 0 0 1 10.8 .1L8.6 2.3L9 4.9L11.6 5.4L13.9 3.2A4.2 4.2 0 0 1 8.8 8.2Z"/></svg>
<div class="t" style="left:523.50px;top:428.15px;font-size:14px;line-height:14px;color:#111;letter-spacing:0.115px;">Manage Indices</div>
<div style="position:absolute;left:26.3px;top:237.3px;width:122.8px;height:27.4px;border:3.5px solid #e30d12;box-sizing:border-box;"></div>
<div style="position:absolute;left:44.3px;top:478.3px;width:117.1px;height:27.1px;border:3.5px solid #e30d12;box-sizing:border-box;"></div>
<div style="position:absolute;left:59.6px;top:630.4px;width:101.6px;height:29.0px;border:3.5px solid #e30d12;box-sizing:border-box;"></div>
<div style="position:absolute;left:328.5px;top:163.5px;width:155.7px;height:35.9px;border:3.5px solid #e30d12;box-sizing:border-box;"></div>
<div style="position:absolute;left:489.3px;top:245.2px;width:192.7px;height:31.2px;border:3.5px solid #e30d12;box-sizing:border-box;"></div>
<svg style="position:absolute;left:0;top:0" width="1199" height="767"><line x1="159" y1="632" x2="316" y2="218" stroke="#e30d12" stroke-width="3"/><path d="M320 208.8L307.8 220.8L321.9 225.2Z" fill="#e30d12"/></svg>
</body></html>
